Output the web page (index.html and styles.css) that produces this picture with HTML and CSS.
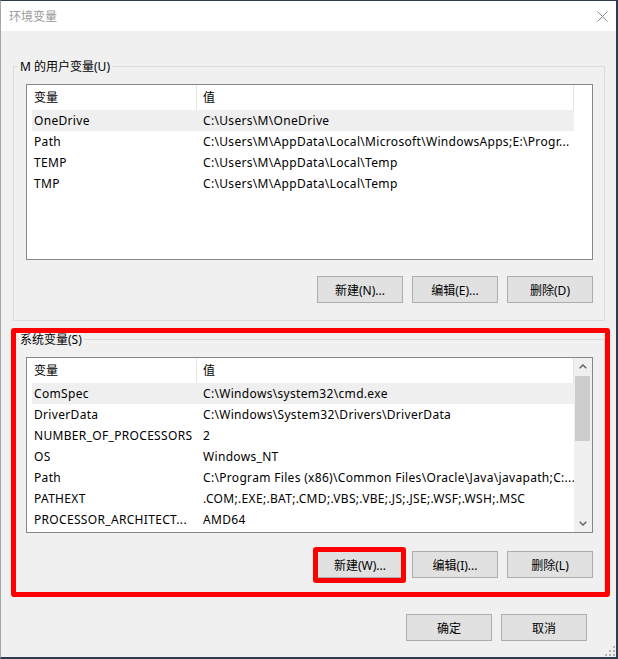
FILE: index.html
```html
<!DOCTYPE html>
<html lang="zh-CN">
<head>
<meta charset="utf-8">
<title>环境变量</title>
<link rel="stylesheet" href="styles.css">
</head>
<body>
<div class="window">
  <div class="titlebar">
    <span class="title">环境变量</span>
    <svg class="close" width="11" height="11" viewBox="0 0 11 11"><path d="M0.5 0.5 L10.5 10.5 M10.5 0.5 L0.5 10.5" stroke="#8c8c8c" stroke-width="1" fill="none"/></svg>
  </div>
  <div class="client">
    <fieldset class="group">
      <legend>M 的用户变量(U)</legend>
      <div class="list">
        <div class="list-main">
          <div class="list-head">
            <div class="hcell hcell-name">变量</div>
            <div class="hcell hcell-value">值</div>
          </div>
          <div class="row sel"><span class="cell">OneDrive</span><span class="cell">C:\Users\M\OneDrive</span></div>
          <div class="row"><span class="cell">Path</span><span class="cell">C:\Users\M\AppData\Local\Microsoft\WindowsApps;E:\Progr...</span></div>
          <div class="row"><span class="cell">TEMP</span><span class="cell">C:\Users\M\AppData\Local\Temp</span></div>
          <div class="row"><span class="cell">TMP</span><span class="cell">C:\Users\M\AppData\Local\Temp</span></div>
        </div>
      </div>
      <div class="btnrow">
        <button class="btn">新建(N)...</button>
        <button class="btn">编辑(E)...</button>
        <button class="btn">删除(D)</button>
      </div>
    </fieldset>

    <fieldset class="group group-sys">
      <legend>系统变量(S)</legend>
      <div class="list">
        <div class="list-main">
          <div class="list-head">
            <div class="hcell hcell-name">变量</div>
            <div class="hcell hcell-value">值</div>
          </div>
          <div class="row sel"><span class="cell">ComSpec</span><span class="cell">C:\Windows\system32\cmd.exe</span></div>
          <div class="row"><span class="cell">DriverData</span><span class="cell">C:\Windows\System32\Drivers\DriverData</span></div>
          <div class="row"><span class="cell">NUMBER_OF_PROCESSORS</span><span class="cell">2</span></div>
          <div class="row"><span class="cell">OS</span><span class="cell">Windows_NT</span></div>
          <div class="row"><span class="cell">Path</span><span class="cell">C:\Program Files (x86)\Common Files\Oracle\Java\javapath;C:...</span></div>
          <div class="row"><span class="cell">PATHEXT</span><span class="cell">.COM;.EXE;.BAT;.CMD;.VBS;.VBE;.JS;.JSE;.WSF;.WSH;.MSC</span></div>
          <div class="row"><span class="cell">PROCESSOR_ARCHITECT...</span><span class="cell">AMD64</span></div>
        </div>
        <div class="scrollbar">
          <div class="sb-arrow">
            <svg width="8" height="5" viewBox="0 0 8 5"><polyline points="0.7,4.3 4,1 7.3,4.3" fill="none" stroke="#606060" stroke-width="1.4"/></svg>
          </div>
          <div class="sb-thumb"></div>
          <div class="sb-track"></div>
          <div class="sb-arrow">
            <svg width="8" height="5" viewBox="0 0 8 5"><polyline points="0.7,0.7 4,4 7.3,0.7" fill="none" stroke="#606060" stroke-width="1.4"/></svg>
          </div>
        </div>
      </div>
      <div class="btnrow">
        <button class="btn">新建(W)...</button>
        <button class="btn">编辑(I)...</button>
        <button class="btn">删除(L)</button>
      </div>
    </fieldset>

    <div class="footer">
      <button class="btn">确定</button>
      <button class="btn">取消</button>
    </div>
  </div>

  <svg class="grip" width="12" height="12" viewBox="0 0 12 12">
    <rect x="9" y="1" width="2" height="2" fill="#b4b4b4"/>
    <rect x="5" y="5" width="2" height="2" fill="#b4b4b4"/>
    <rect x="9" y="5" width="2" height="2" fill="#b4b4b4"/>
    <rect x="1" y="9" width="2" height="2" fill="#b4b4b4"/>
    <rect x="5" y="9" width="2" height="2" fill="#b4b4b4"/>
    <rect x="9" y="9" width="2" height="2" fill="#b4b4b4"/>
  </svg>

  <div class="mark mark-group"></div>
  <div class="mark mark-btn"></div>
</div>
</body>
</html>
```

FILE: styles.css
```css
* {
  box-sizing: border-box;
}

html,
body {
  margin: 0;
  padding: 0;
}

body {
  width: 618px;
  height: 659px;
  overflow: hidden;
  background: #f0f0f0;
  font-family: "Noto Sans", "Noto Sans CJK SC", sans-serif;
  font-size: 12px;
  color: #000;
}

.window {
  position: relative;
  width: 618px;
  height: 659px;
  display: flex;
  flex-direction: column;
  background: #f0f0f0;
  border-style: solid;
  border-width: 1px 2px 2px 1px;
  border-color: #2c3b4d #2c3b4d #2c3b4d #a6a6a6;
}

.titlebar {
  height: 30px;
  flex: 0 0 30px;
  background: #fff;
  display: flex;
  align-items: center;
  justify-content: space-between;
  padding: 0 8px 0 8px;
}

.title {
  color: #9a9a9a;
  font-size: 12px;
}

.close {
  display: block;
}

.client {
  flex: 1;
  padding: 27px 11px 0 12px;
}

.group {
  margin: 0;
  min-width: 0;
  padding: 10px 11px 17px 12px;
  border: 1px solid #dcdcdc;
}

.group + .group {
  margin-top: 10px;
}

.group legend {
  margin-left: -8px;
  padding: 0 2px;
  height: 16px;
  line-height: 17px;
}

.list {
  height: 176px;
  border: 1px solid #828790;
  background: #fff;
  display: flex;
  overflow: hidden;
}

.list-main {
  width: 547px;
  flex: 0 0 547px;
}

.list-head {
  display: flex;
  height: 25px;
}

.hcell {
  height: 25px;
  line-height: 26px;
  border-right: 1px solid #e5e5e5;
  white-space: nowrap;
}

.hcell-name {
  width: 170px;
  padding-left: 7px;
}

.hcell-value {
  width: 377px;
  padding-left: 6px;
}

.row {
  display: grid;
  grid-template-columns: 169px 1fr;
  margin-left: 5px;
  width: 542px;
  height: 21px;
  line-height: 22px;
}

.row.sel {
  background: #efefef;
}

.cell {
  padding-left: 2px;
  white-space: nowrap;
  overflow: hidden;
  letter-spacing: 0.32px;
}

.scrollbar {
  flex: 1;
  background: #f0f0f0;
  display: flex;
  flex-direction: column;
}

.sb-arrow {
  height: 17px;
  display: flex;
  align-items: center;
  justify-content: center;
}

.sb-thumb {
  height: 65px;
  margin: 1px 2px 0 1px;
  background: #cdcdcd;
}

.sb-track {
  flex: 1;
}

.btnrow {
  display: flex;
  justify-content: flex-end;
  gap: 9px;
  margin-top: 16px;
}

.group-sys .btnrow {
  margin-top: 18px;
}

.btn {
  width: 86px;
  height: 27px;
  margin: 0;
  padding: 1px 0 0;
  background: #e1e1e1;
  border: 1px solid #adadad;
  border-radius: 0;
  font: inherit;
  color: #000;
  display: flex;
  align-items: center;
  justify-content: center;
}

.footer {
  display: flex;
  justify-content: flex-end;
  gap: 9px;
  margin-top: 18px;
  padding-right: 18px;
}

.grip {
  position: absolute;
  right: 0;
  bottom: 0;
}

.mark {
  position: absolute;
  border: 5px solid #ff0000;
  border-radius: 3px;
  pointer-events: none;
}

.mark-group {
  left: 10px;
  top: 327px;
  width: 599px;
  height: 269px;
}

.mark-btn {
  left: 312px;
  top: 546px;
  width: 93px;
  height: 36px;
}
```
